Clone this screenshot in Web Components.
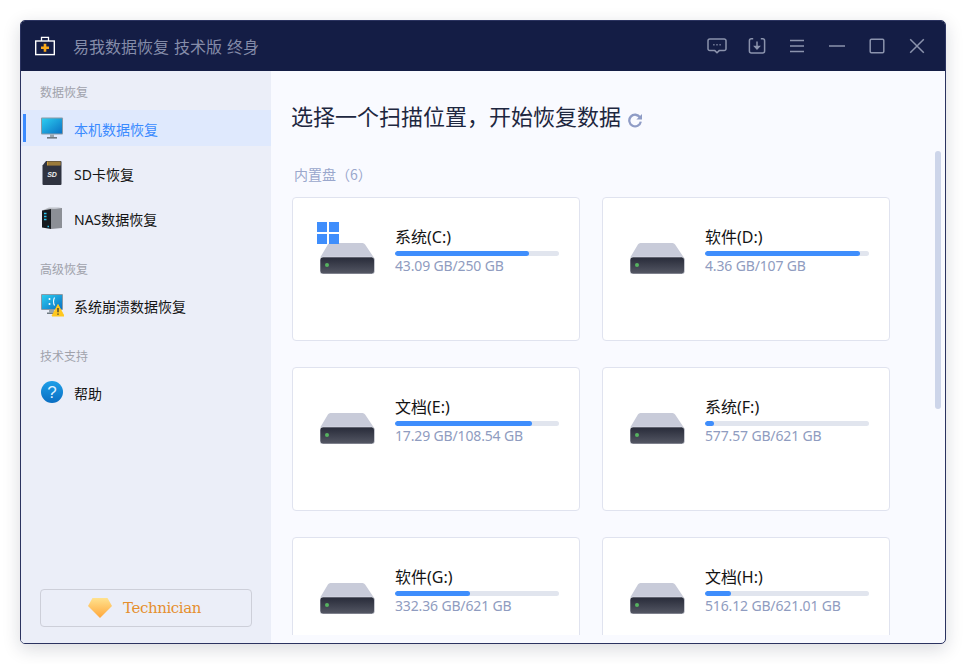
<!DOCTYPE html>
<html lang="zh"><head><meta charset="utf-8"><title>易我数据恢复</title>
<style>
html,body{margin:0;padding:0;background:#fff;width:966px;height:664px;overflow:hidden}
body{font-family:"Noto Sans","Noto Sans CJK SC",sans-serif;}
</style></head><body>
<app-window>
  <title-bar slot="top"></title-bar>
  <side-nav slot="side">
    <nav-label>数据恢复</nav-label>
    <nav-item icon="monitor" active>本机数据恢复</nav-item>
    <nav-item icon="sd">SD卡恢复</nav-item>
    <nav-item icon="nas">NAS数据恢复</nav-item>
    <nav-label class="next">高级恢复</nav-label>
    <nav-item icon="crash">系统崩溃数据恢复</nav-item>
    <nav-label class="next">技术支持</nav-label>
    <nav-item icon="help">帮助</nav-item>
    <tech-badge slot="foot">Technician</tech-badge>
  </side-nav>
  <drive-panel slot="main" heading="选择一个扫描位置，开始恢复数据" label="内置盘（6）">
    <drive-card name="系统(C:)" size="43.09 GB/250 GB" pct="81.7" win></drive-card>
    <drive-card name="软件(D:)" size="4.36 GB/107 GB" pct="94.5"></drive-card>
    <drive-card name="文档(E:)" size="17.29 GB/108.54 GB" pct="83.5"></drive-card>
    <drive-card name="系统(F:)" size="577.57 GB/621 GB" pct="5.5"></drive-card>
    <drive-card name="软件(G:)" size="332.36 GB/621 GB" pct="45.7"></drive-card>
    <drive-card name="文档(H:)" size="516.12 GB/621.01 GB" pct="15.9"></drive-card>
  </drive-panel>
</app-window>
<script>
const define=(name,css,html,init)=>customElements.define(name,class extends HTMLElement{
  connectedCallback(){
    if(this.shadowRoot)return;
    const r=this.attachShadow({mode:'open'});
    r.innerHTML=`<style>${css}</style>`+(typeof html==='function'?html(this):html);
    if(init)init(this,r);
  }
});

define('app-window',`
:host{display:grid;grid-template-columns:250px 1fr;grid-template-rows:50px 1fr;box-sizing:border-box;width:926px;height:624px;margin:20px;border:1px solid #2b3360;border-radius:5px;overflow:hidden;background:#f9faff;box-shadow:0 5px 18px rgba(20,25,50,.16)}
::slotted([slot=top]){grid-column:1/3}
`,`<slot name="top"></slot><slot name="side"></slot><slot name="main"></slot>`);

const winIcons=`
<svg viewBox="0 0 20 20"><path d="M2.800 3h14.400a1.800 1.800 0 0 1 1.800 1.800v8a1.800 1.800 0 0 1-1.800 1.800h-5L10 16.800l-2.200-2.200h-5A1.800 1.800 0 0 1 1 12.800v-8A1.800 1.800 0 0 1 2.800 3z"/><path d="M6.300 8.800h1.200M9.400 8.800h1.200M12.500 8.800h1.200" stroke-width="1.600"/></svg>
<svg viewBox="0 0 20 20"><path d="M6.200 2.800H4.400a2 2 0 0 0-2 2V15a2 2 0 0 0 2 2h11.200a2 2 0 0 0 2-2V4.800a2 2 0 0 0-2-2h-1.800"/><path d="M10 5.500v7"/><path d="M7.800 10.600 10 13l2.200-2.400h-4.400z" fill="#8b93ad"/></svg>
<svg viewBox="0 0 20 20"><path d="M3 4.500h14M3 10h14M3 15.500h14"/></svg>
<svg viewBox="0 0 20 20"><path d="M2 10h16"/></svg>
<svg viewBox="0 0 20 20"><rect x="3.200" y="3.200" width="13.600" height="13.600" rx="1.200"/></svg>
<svg viewBox="0 0 20 20"><path d="M3.200 3.200l13.600 13.600M16.800 3.200 3.200 16.800"/></svg>`;
define('title-bar',`
:host{display:flex;align-items:center;background:#141d45;height:50px;padding:0 8px 0 14px;color:#858ca9;font:16px "Noto Sans CJK SC","Noto Sans",sans-serif}
.logo{width:20px;height:20px;margin-right:18px;flex:none}
.t{flex:1;white-space:pre;word-spacing:1.400px}
.b{display:flex}
.b svg{width:20px;height:20px;padding:0 10px;fill:none;stroke:#8b93ad;stroke-width:1.500}
`,`<svg class="logo" viewBox="0 0 20 20"><path d="M6.500 5V1.400h7V5" fill="none" stroke="#fff" stroke-width="1.300"/><rect x=".7" y="5" width="18.600" height="13.600" fill="none" stroke="#fff" stroke-width="1.400"/><path d="M10 7.800v8M6 11.800h8" stroke="#f9a81a" stroke-width="2.600"/></svg>
<span class="t">易我数据恢复 技术版 终身</span><div class="b">${winIcons}</div>`);

define('side-nav',`
:host{display:flex;flex-direction:column;width:250px;box-sizing:border-box;background:#ebeef8;height:572px;padding-top:11px}
.f{margin-top:auto;padding:0 19px 16px}
`,`<slot></slot><div class="f"><slot name="foot"></slot></div>`);

define('nav-label',`
:host{display:block;font:12px/20px "Noto Sans CJK SC",sans-serif;color:#a0a2ab;padding-left:19px;margin-bottom:8px}
:host(.next){margin-top:14px}
`,`<slot></slot>`);

const navIcons={
monitor:`<svg viewBox="0 0 24 24"><defs><linearGradient id="m" x1="0" y1="0" x2="1" y2="1"><stop offset="0" stop-color="#2ccdf0"/><stop offset="1" stop-color="#0b72c4"/></linearGradient></defs><rect x="1" y="1.500" width="22" height="17" rx="1" fill="#8a9aa6"/><rect x="2" y="2.500" width="20" height="15" fill="url(#m)"/><rect x="10" y="18.500" width="4" height="2.500" fill="#9aa5ad"/><rect x="7" y="21" width="10" height="1.600" fill="#6f7a82"/></svg>`,
sd:`<svg viewBox="0 0 24 24"><path d="M6 0h14.500a1 1 0 0 1 1 1v22a1 1 0 0 1-1 1h-17a1 1 0 0 1-1-1V4.500z" fill="#2f3340"/><path d="M7 .5h13.500v4H7z" fill="#c99a3a"/><path d="M9 .5v4M11 .5v4M13 .5v4M15 .5v4M17 .5v4M19 .5v4" stroke="#2f3340" stroke-width=".6"/><text x="12" y="16" text-anchor="middle" font-family="Liberation Sans" font-size="7" font-weight="700" font-style="italic" fill="#eee">SD</text></svg>`,
nas:`<svg viewBox="0 0 24 24"><path d="M11 3 22 2v20l-11 1z" fill="#8c8f96"/><path d="M2 4.500 9 1.500h13L11 3z" fill="#b9bcc2"/><path d="M2 4.500 11 3v20l-9-1.500z" fill="#16191e"/><path d="M4 7.500h2.500M4 10.500h2.500M4 13.500h2.500" stroke="#2fc6ef" stroke-width="1.400"/><path d="M7.500 20.500h1.500" stroke="#2fc6ef" stroke-width="1.400"/></svg>`,
crash:`<svg viewBox="0 0 24 24"><defs><linearGradient id="c" x1="0" y1="0" x2="1" y2="1"><stop offset="0" stop-color="#2ccdf0"/><stop offset="1" stop-color="#0b72c4"/></linearGradient></defs><rect x="1" y="1" width="22" height="16" rx="1" fill="#8a9aa6"/><rect x="2" y="2" width="20" height="14" fill="url(#c)"/><circle cx="9.500" cy="6" r="1" fill="#fff"/><circle cx="9.500" cy="11" r="1" fill="#fff"/><path d="M14.500 4.500q-2 4 0 8" fill="none" stroke="#fff" stroke-width="1.100"/><rect x="9" y="17" width="5" height="2.500" fill="#9aa5ad"/><rect x="7" y="19.500" width="9" height="1.500" fill="#6f7a82"/><path d="M18 11.500 24 23H12z" fill="#ffc81f" stroke="#ffc81f" stroke-linejoin="round"/><path d="M18 15v4.200M18 20.500v1.300" stroke="#333" stroke-width="1.300"/></svg>`,
help:`<svg viewBox="0 0 24 24"><defs><linearGradient id="h" x1="0" y1="0" x2="0" y2="1"><stop offset="0" stop-color="#1e9fe8"/><stop offset="1" stop-color="#0a6ec2"/></linearGradient></defs><circle cx="12" cy="12" r="11" fill="url(#h)"/><text x="12" y="18" text-anchor="middle" font-family="Liberation Sans" font-size="17" fill="#dff1ff">?</text></svg>`};
define('nav-item',`
:host{display:flex;align-items:center;position:relative;height:36px;margin-bottom:9px;padding-left:19px;font:14px "Noto Sans","Noto Sans CJK SC",sans-serif;color:#141414}
:host([active]){background:#dfe9fd;color:#3b8bff}
:host([active])::before{content:"";position:absolute;left:2px;top:4px;bottom:4px;width:3px;background:#3b8bff}
svg{width:24px;height:24px;flex:none;margin-right:10px}
.t{margin-top:2px}
`,h=>`${navIcons[h.getAttribute('icon')]}<span class="t"><slot></slot></span>`);

define('tech-badge',`
:host{display:flex;align-items:center;justify-content:center;box-sizing:border-box;height:38px;border:1px solid #cdcfd9;border-radius:4px;color:#e58f2e;font:15px "DejaVu Serif",serif;letter-spacing:-.4px;padding-right:3px}
svg{width:24px;height:20px;margin-right:11px}
`,`<svg viewBox="0 0 24 20"><defs><linearGradient id="g" x1="0" y1="0" x2="0" y2="1"><stop offset="0" stop-color="#ffe28e"/><stop offset="1" stop-color="#ffa63a"/></linearGradient></defs><path d="M4.500 0h15L24 8 12 20 0 8z" fill="url(#g)"/></svg><slot></slot>`);

define('drive-panel',`
:host{display:flex;flex-direction:column;height:572px;min-width:0}
h1{margin:0;height:80px;box-sizing:border-box;padding:30px 0 0 20px;font:22px/29px "Noto Sans CJK SC",sans-serif;color:#1e2740;display:flex;align-items:flex-start}
h1 svg{width:16px;height:16px;margin:11px 0 0 6px}
.s{flex:1;position:relative;overflow:hidden;margin-bottom:8px;padding-left:21px}
.l{font:14px/20px "Noto Sans CJK SC",sans-serif;color:#9aa7cc;padding:13px 0 0 2px;margin-bottom:13px}
.g{display:grid;grid-template-columns:288px 288px;column-gap:22px;row-gap:26px}
.bar{position:absolute;right:4px;top:0;width:6px;height:258px;border-radius:3px;background:#cdd5ea}
`,h=>`<h1><span>${h.getAttribute('heading')}</span><svg viewBox="0 0 16 16"><path d="M13 5.400A5.800 5.800 0 1 0 13.800 9.600" fill="none" stroke="#8f9cc6" stroke-width="2.300"/><path d="M15 2v5.600H9.400z" fill="#8f9cc6"/></svg></h1>
<div class="s"><div class="l">${h.getAttribute('label')}</div><div class="g"><slot></slot></div><div class="bar"></div></div>`);

define('drive-card',`
:host{display:flex;position:relative;box-sizing:border-box;height:144px;background:#fff;border:1px solid #e0e3ef;border-radius:4px;padding:27px 0 0 27px;flex:none}
.d{width:55px;height:31px;margin:18px 20px 0 0;flex:none}
.n{font:16px/24px "Noto Sans","Noto Sans CJK SC",sans-serif;color:#141414;height:26px}
.t{width:164px;height:5px;border-radius:3px;background:#e1e5ee;overflow:hidden}
.f{height:100%;background:#3f8efc;border-radius:3px}
.z{font:14px/20px "Noto Sans","Noto Sans CJK SC",sans-serif;color:#8f9cc0;letter-spacing:-.15px}
.w{position:absolute;left:24px;top:24px;width:22px;height:22px}
`,h=>`<svg class="d" viewBox="0 0 55 31"><defs><linearGradient id="b" x1="0" y1="0" x2="0" y2="1"><stop offset="0" stop-color="#272a38"/><stop offset="1" stop-color="#555865"/></linearGradient></defs><path d="M10.500 0h32a3 3 0 0 1 2.600 1.500L53.500 14H.5L7.900 1.500A3 3 0 0 1 10.500 0z" fill="#c8cbd9"/><rect x="0" y="14" width="54.500" height="17" rx="3" fill="url(#b)" stroke="#e4e6ee" stroke-width=".6"/><circle cx="7" cy="22" r="2" fill="#56b25f"/></svg>
${h.hasAttribute('win')?`<svg class="w" viewBox="0 0 22 22"><path d="M0 0h10v10H0zM12 0h10v10H12zM0 12h10v10H0zM12 12h10v10H12z" fill="#3f8efc"/></svg>`:''}
<div><div class="n">${h.getAttribute('name')}</div><div class="t"><div class="f" style="width:${h.getAttribute('pct')}%"></div></div><div class="z">${h.getAttribute('size')}</div></div>`);
</script>
</body></html>
